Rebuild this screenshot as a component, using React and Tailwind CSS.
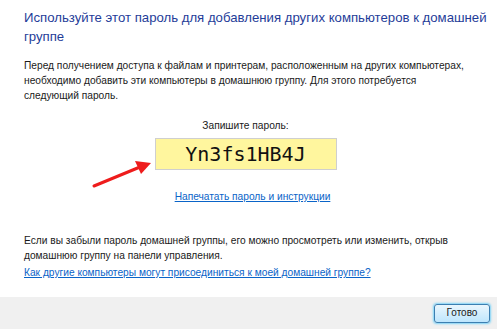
const App = () => {
  return (
    <div className="w-[497px] h-[329px] bg-white flex flex-col relative overflow-hidden whitespace-nowrap" style={{ fontFamily: '"Liberation Sans", Arial, sans-serif' }}>
      {/* Content */}
      <div className="flex-1 px-6 pt-[8px]">
        <h1 className="text-[13.2px] leading-[19px] text-[#1f3d99]">
          Используйте этот пароль для добавления других компьютеров к домашней
          <br />
          группе
        </h1>
        <p className="mt-[12px] text-[10.2px] leading-[15px] text-[#1a1a1a]">
          Перед получением доступа к файлам и принтерам, расположенным на других компьютерах,
          <br />
          необходимо добавить эти компьютеры в домашнюю группу. Для этого потребуется
          <br />
          следующий пароль.
        </p>

        <div className="mt-[15px] flex flex-col items-center pr-[6px]">
          <div className="text-[10.2px] leading-[15px] text-[#1a1a1a]">Запишите пароль:</div>
          <div
            className="mt-[5px] w-[182px] h-[32px] bg-[#fff69e] border border-[#cfcfcf] flex items-center justify-center text-[20px] text-[#111]"
            style={{ fontFamily: '"DejaVu Sans Mono", "Liberation Mono", monospace' }}
          >
            Yn3fs1HB4J
          </div>
          <a href="#" className="mt-[19px] ml-[14px] text-[10.2px] leading-[15px] text-[#0a64c8] underline">
            Напечатать пароль и инструкции
          </a>
        </div>

        <p className="mt-[29px] text-[10.2px] leading-[15px] text-[#1a1a1a]">
          Если вы забыли пароль домашней группы, его можно просмотреть или изменить, открыв
          <br />
          домашнюю группу на панели управления.
        </p>
        <a href="#" className="block mt-[2px] text-[10.2px] leading-[15px] text-[#0a64c8] underline">
          Как другие компьютеры могут присоединиться к моей домашней группе?
        </a>
      </div>

      {/* Footer */}
      <div className="h-[32px] bg-[#f0f0f0] flex items-center justify-end pr-[7px]">
        <button className="w-[56px] h-[19px] rounded-[3px] border border-[#3c7fb1] shadow-[0_0_2px_1px_#7fd3f7] bg-gradient-to-b from-[#eaf6fd] to-[#bee6fd] text-[10px] leading-none text-[#1a1a1a]">
          Готово
        </button>
      </div>

      {/* Red arrow annotation */}
      <svg className="absolute left-0 top-0 pointer-events-none" width="497" height="329">
        <line x1="94" y1="186" x2="140" y2="167" stroke="#ee1c1c" strokeWidth="3" strokeLinecap="round" />
        <polygon points="151,163 135,161 141,174" fill="#ee1c1c" />
      </svg>
    </div>
  );
};

export default App;
